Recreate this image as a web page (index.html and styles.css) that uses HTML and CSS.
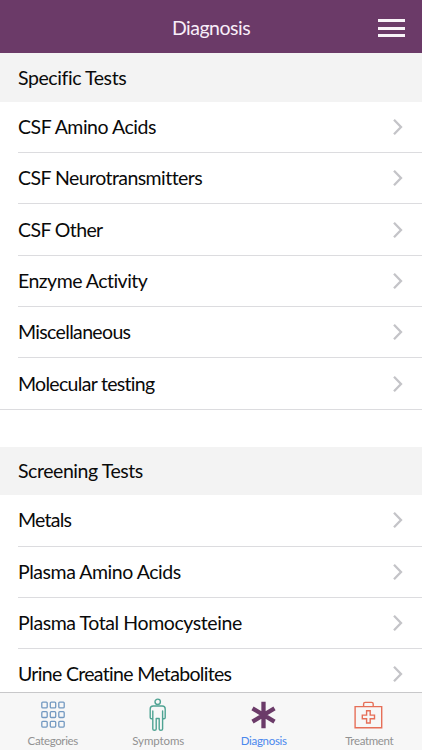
FILE: index.html
```html
<!DOCTYPE html>
<html lang="en">
<head>
<meta charset="utf-8">
<title>Diagnosis</title>
<link rel="stylesheet" href="styles.css">
</head>
<body>
<svg class="defs" width="0" height="0" aria-hidden="true"><symbol id="chevron" viewBox="0 0 12 18"><path d="M2 1.8 9 9l-7 7.2" fill="none" stroke="#c4c4c8" stroke-width="2.3"/></symbol></svg>
<div class="app">
<header class="header"><h1 class="title">Diagnosis</h1><button class="menu" aria-label="Menu"><span class="bar"></span><span class="bar"></span><span class="bar"></span></button></header>
<main class="content">
<section class="group">
<h2 class="heading"><span class="label t1">Specific Tests</span></h2>
<ul class="list">
<li class="row"><span class="label t2">CSF Amino Acids</span><svg class="chevron"><use href="#chevron"/></svg></li>
<li class="row"><span class="label t3">CSF Neurotransmitters</span><svg class="chevron"><use href="#chevron"/></svg></li>
<li class="row"><span class="label t4">CSF Other</span><svg class="chevron"><use href="#chevron"/></svg></li>
<li class="row"><span class="label t5">Enzyme Activity</span><svg class="chevron"><use href="#chevron"/></svg></li>
<li class="row"><span class="label t6">Miscellaneous</span><svg class="chevron"><use href="#chevron"/></svg></li>
<li class="row"><span class="label t7">Molecular testing</span><svg class="chevron"><use href="#chevron"/></svg></li>
</ul>
</section>
<section class="group">
<h2 class="heading"><span class="label t8">Screening Tests</span></h2>
<ul class="list">
<li class="row"><span class="label t9">Metals</span><svg class="chevron"><use href="#chevron"/></svg></li>
<li class="row"><span class="label t10">Plasma Amino Acids</span><svg class="chevron"><use href="#chevron"/></svg></li>
<li class="row"><span class="label t11">Plasma Total Homocysteine</span><svg class="chevron"><use href="#chevron"/></svg></li>
<li class="row"><span class="label t12">Urine Creatine Metabolites</span><svg class="chevron"><use href="#chevron"/></svg></li>
</ul>
</section>
</main>
<nav class="tabs">
<a class="tab"><svg class="icon" viewBox="0 0 32 34"><g fill="none" stroke="#7399c1" stroke-width="1.3"><rect x="4.8" y="4.1" width="5.4" height="5.8" rx="1"/><rect x="13.3" y="4.1" width="5.4" height="5.8" rx="1"/><rect x="21.8" y="4.1" width="5.4" height="5.8" rx="1"/><rect x="4.8" y="13.7" width="5.4" height="5.8" rx="1"/><rect x="13.3" y="13.7" width="5.4" height="5.8" rx="1"/><rect x="21.8" y="13.7" width="5.4" height="5.8" rx="1"/><rect x="4.8" y="23.3" width="5.4" height="5.8" rx="1"/><rect x="13.3" y="23.3" width="5.4" height="5.8" rx="1"/><rect x="21.8" y="23.3" width="5.4" height="5.8" rx="1"/></g></svg><span class="name n1">Categories</span></a>
<a class="tab"><svg class="icon" viewBox="0 0 32 34"><g fill="none" stroke="#4fa393" stroke-width="1.4" stroke-linejoin="round" stroke-linecap="round"><circle cx="15.7" cy="3.8" r="2.7"/><path d="M11.2 8h9q3 0 3 3v8.5q0 1.2-1.3 1.2t-1.3-1.2V13v18q0 1.3-1.7 1.3T17.2 31V20.5h-3V31q0 1.3-1.7 1.3T10.8 31V13v6.5q0 1.2-1.3 1.2t-1.3-1.2V11q0-3 3-3z"/></g></svg><span class="name n2">Symptoms</span></a>
<a class="tab active"><svg class="icon" viewBox="0 0 32 34"><path d="M15.5 3.8v26.4M4.5 10.4l22 13.2M26.5 10.4l-22 13.2" fill="none" stroke="#6b3b69" stroke-width="4.3"/></svg><span class="name n3">Diagnosis</span></a>
<a class="tab"><svg class="icon" viewBox="0 0 32 34"><g fill="none" stroke="#e66f58" stroke-width="1.4"><path d="M2.1 8.6h26.6v21.2H2.1zM10.6 8.6V6q0-1.6 1.6-1.6h6.4q1.6 0 1.6 1.6v2.6M13.6 12.8h3.6v4.3h4.3v3.7h-4.3V25h-3.6v-4.2H9.3v-3.7h4.3z"/></g></svg><span class="name n4">Treatment</span></a>
</nav>
</div>
</body>
</html>
```
FILE: styles.css
```css
* { box-sizing: border-box; }
body { margin: 0; font-family: Lato, "Liberation Sans", sans-serif; font-variant-ligatures: none; color: #0a0a0a; background: #fff; }
.defs { position: absolute; }
.app { height: 750px; display: flex; flex-direction: column; overflow: hidden; }
.header { height: 53.4px; flex: none; display: grid; grid-template-columns: 1fr auto 1fr; align-items: center; padding: 3px 17px 0; background: #6b3a68; }
.title { grid-column: 2; margin: 0; padding-bottom: 1px; font-size: 19.5px; font-weight: 400; color: #f8edf8; letter-spacing: -0.5px; }
.menu { justify-self: end; display: flex; flex-direction: column; gap: 4.4px; width: 27px; padding: 0; border: 0; background: none; }
.bar { height: 3.1px; background: #f8f3f8; }
.content { flex: 1; min-height: 0; overflow: hidden; }
.group { margin-bottom: 37.2px; }
.heading { height: 48.3px; margin: 0; padding-left: 18px; display: flex; align-items: center; background: #f3f3f3; font-size: 19.5px; font-weight: 400; }
.list { list-style: none; margin: 0; padding: 0 0 0 18px; border-bottom: 1px solid #dcdcdf; }
.row { height: 51.35px; display: flex; align-items: center; justify-content: space-between; padding-right: 18px; border-bottom: 1px solid #dcdcdf; font-size: 19.5px; }
.row:last-child { border-bottom: 0; height: 50.35px; }
.label { white-space: nowrap; padding-bottom: 1px; }
.t1 { letter-spacing: -0.42px; }
.t2 { letter-spacing: -0.47px; }
.t3 { letter-spacing: -0.56px; }
.t4 { letter-spacing: -0.6px; }
.t5 { letter-spacing: -0.52px; }
.t6 { letter-spacing: -0.66px; }
.t7 { letter-spacing: -0.7px; }
.t8 { letter-spacing: -0.44px; }
.t9 { letter-spacing: -0.75px; }
.t10 { letter-spacing: -0.45px; }
.t11 { letter-spacing: -0.42px; }
.t12 { letter-spacing: -0.68px; }
.chevron { width: 12px; height: 18px; }
.tabs { height: 58px; flex: none; display: grid; grid-template-columns: repeat(4, 1fr); border-top: 1px solid #c8c8ca; background: #f7f7f7; }
.tab { display: flex; flex-direction: column; align-items: center; padding-top: 5px; color: #929292; font-size: 11.5px; }
.icon { width: 32px; height: 34px; }
.name { line-height: 14px; margin-top: 2px; }
.n1 { letter-spacing: -0.35px; }
.n2 { letter-spacing: -0.1px; }
.n3 { letter-spacing: -0.3px; }
.n4 { letter-spacing: -0.35px; }
.active { color: #4a88ed; }
```
